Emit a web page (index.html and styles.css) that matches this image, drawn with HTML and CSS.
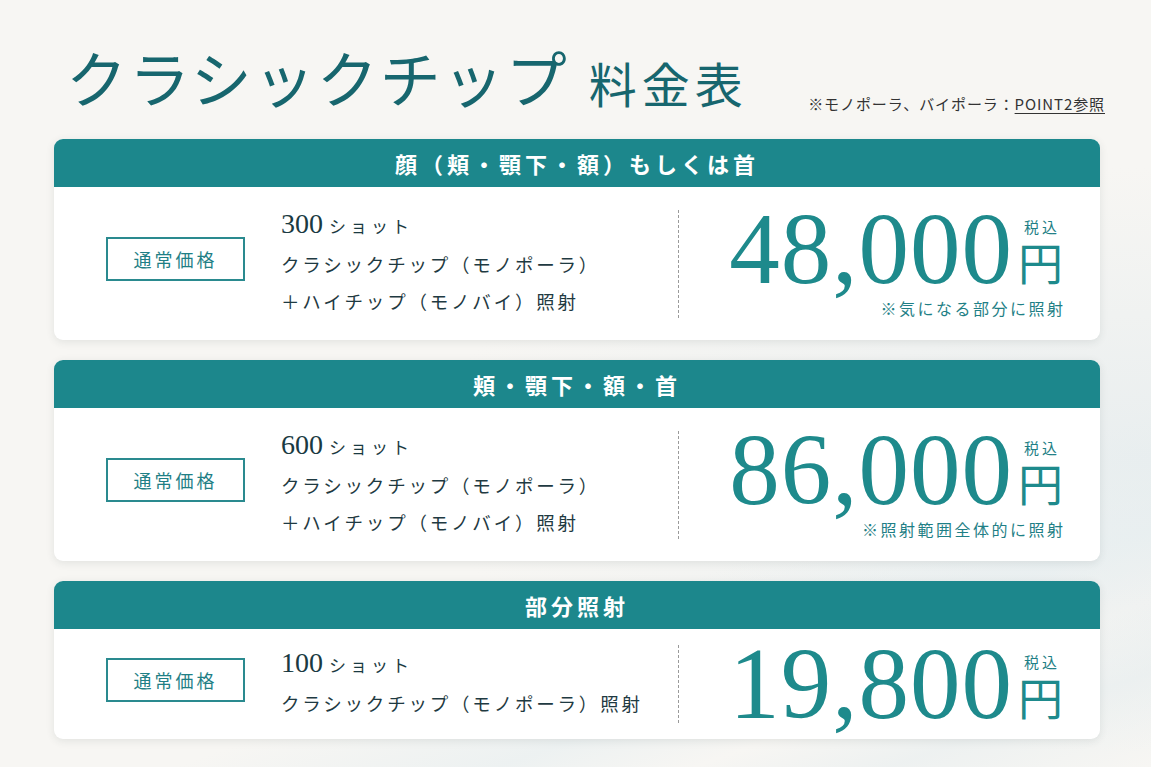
FILE: index.html
```html
<!DOCTYPE html>
<html lang="ja">
<head>
<meta charset="utf-8">
<title>クラシックチップ 料金表</title>
<link rel="stylesheet" href="styles.css">
</head>
<body>
<div class="page">
  <header class="top">
    <h1 class="title"><span class="title-main">クラシックチップ</span><span class="title-sub">料金表</span></h1>
    <p class="top-note">※モノポーラ、バイポーラ：<span class="link">POINT2参照</span></p>
  </header>

  <section class="card">
    <h2 class="card-head">顔（頬・顎下・額）もしくは首</h2>
    <div class="card-body">
      <div class="badge">通常価格</div>
      <div class="desc">
        <p class="shots"><span class="num">300</span><span class="unit">ショット</span></p>
        <p class="line">クラシックチップ（モノポーラ）</p>
        <p class="line">＋ハイチップ（モノバイ）照射</p>
      </div>
      <div class="price">
        <div class="amount"><span class="value">48,000</span><span class="yen"><span class="tax">税込</span><span class="en">円</span></span></div>
        <p class="price-note">※気になる部分に照射</p>
      </div>
    </div>
  </section>

  <section class="card">
    <h2 class="card-head">頬・顎下・額・首</h2>
    <div class="card-body">
      <div class="badge">通常価格</div>
      <div class="desc">
        <p class="shots"><span class="num">600</span><span class="unit">ショット</span></p>
        <p class="line">クラシックチップ（モノポーラ）</p>
        <p class="line">＋ハイチップ（モノバイ）照射</p>
      </div>
      <div class="price">
        <div class="amount"><span class="value">86,000</span><span class="yen"><span class="tax">税込</span><span class="en">円</span></span></div>
        <p class="price-note">※照射範囲全体的に照射</p>
      </div>
    </div>
  </section>

  <section class="card">
    <h2 class="card-head">部分照射</h2>
    <div class="card-body card-body-short">
      <div class="badge">通常価格</div>
      <div class="desc">
        <p class="shots"><span class="num">100</span><span class="unit">ショット</span></p>
        <p class="line">クラシックチップ（モノポーラ）照射</p>
      </div>
      <div class="price">
        <div class="amount"><span class="value">19,800</span><span class="yen"><span class="tax">税込</span><span class="en">円</span></span></div>
      </div>
    </div>
  </section>
</div>
</body>
</html>
```

FILE: styles.css
```css
* { box-sizing: border-box; }
html, body { margin: 0; padding: 0; }
body {
  width: 1151px;
  height: 767px;
  overflow: hidden;
  font-family: "Noto Sans CJK JP", "Noto Sans", sans-serif;
  background:
    linear-gradient(160deg, rgba(255,255,255,0) 70%, rgba(230,238,240,0.6) 80%, rgba(255,255,255,0) 86%, rgba(228,236,238,0.5) 92%, rgba(255,255,255,0) 100%),
    radial-gradient(ellipse at 100% 60%, #e9eeef 0%, rgba(240,243,243,0) 45%),
    #f7f6f3;
  color: #1f3a42;
}
.page {
  padding: 0 51px 0 54px;
}
.top {
  height: 139px;
  display: flex;
  align-items: flex-end;
  justify-content: space-between;
  padding: 0 0 24px 12px;
}
.title {
  margin: 0 0 8px;
  font-weight: 400;
  color: #17666e;
  display: flex;
  align-items: baseline;
  line-height: 1;
}
.title-main {
  font-size: 61px;
  letter-spacing: 2px;
}
.title-sub {
  font-size: 48px;
  letter-spacing: 5px;
  margin-left: 20px;
}
.top-note {
  margin: 0 -5px 0 0;
  font-size: 15px;
  letter-spacing: 0.9px;
  color: #333;
  line-height: 1;
  padding-bottom: 4px;
}
.link { text-decoration: underline; text-underline-offset: 3px; }

.card {
  background: #fff;
  border-radius: 9px;
  overflow: hidden;
  box-shadow: 0 2px 8px rgba(40, 60, 60, 0.10);
  margin-bottom: 20px;
}
.card-head {
  margin: 0;
  height: 48px;
  background: #1c878c;
  color: #fff;
  font-size: 22px;
  font-weight: 700;
  letter-spacing: 4px;
  display: flex;
  align-items: center;
  justify-content: center;
}
.card-body {
  height: 153px;
  display: flex;
  align-items: center;
  padding: 0 37px 0 52px;
}
.card-body-short { height: 110px; }

.badge {
  width: 139px;
  height: 44px;
  border: 2px solid #2a8a8f;
  color: #1f7f86;
  font-size: 18px;
  letter-spacing: 3px;
  display: flex;
  align-items: center;
  justify-content: center;
  flex: none;
  margin-bottom: 10px;
}
.card-body-short .badge { margin-bottom: 8px; }
.desc {
  width: 397px;
  margin-left: 36px;
  flex: none;
}
.desc p { margin: 0; }
.shots {
  height: 38px;
  display: flex;
  align-items: baseline;
  color: #1a3a42;
}
.num {
  font-family: "Liberation Serif", "DejaVu Serif", serif;
  font-size: 28px;
  margin-right: 6px;
}
.unit {
  font-size: 17px;
  letter-spacing: 4px;
}
.line {
  font-size: 18.5px;
  letter-spacing: 2.8px;
  line-height: 37px;
  color: #1f3a42;
}
.price {
  flex: 1;
  border-left: 1px dashed #9a9a9a;
  display: flex;
  flex-direction: column;
  align-items: flex-end;
  color: #1e8a8c;
}
.amount {
  display: flex;
  align-items: flex-end;
}
.value {
  font-family: "Liberation Serif", "DejaVu Serif", serif;
  font-size: 101px;
  line-height: 78px;
  letter-spacing: 1px;
}
.yen {
  display: flex;
  flex-direction: column;
  align-items: center;
  margin-left: 5px;
}
.tax {
  font-size: 15px;
  letter-spacing: 3px;
  margin-right: -3px;
  line-height: 18px;
  color: #1f7f86;
}
.en {
  font-size: 45px;
  line-height: 52px;
}
.price-note {
  margin: 10px 0 0;
  font-size: 16px;
  letter-spacing: 2.5px;
  margin-right: -2.5px;
  color: #1f7f86;
  line-height: 20px;
}
```
